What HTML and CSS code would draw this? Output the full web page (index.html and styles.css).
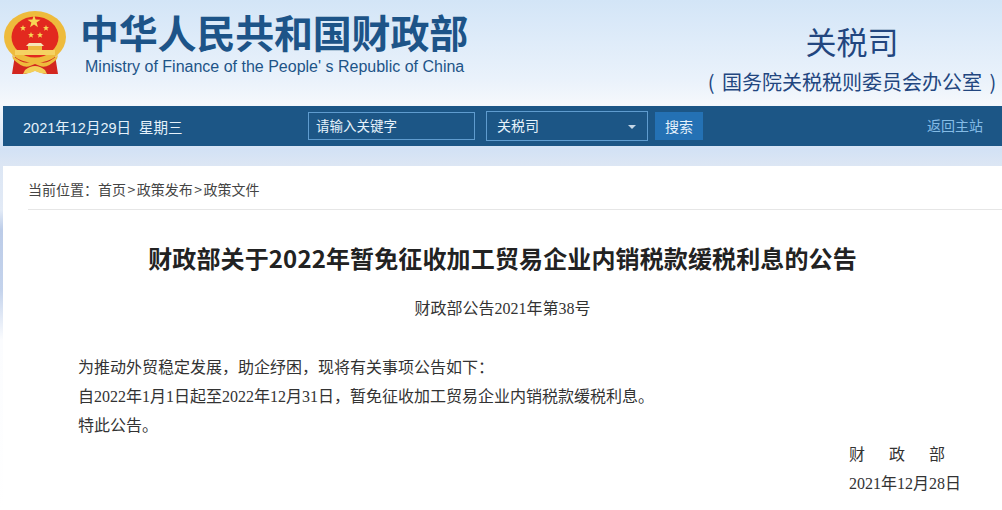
FILE: index.html
```html
<!DOCTYPE html>
<html lang="zh-CN">
<head>
    <meta charset="UTF-8">
    <title>财政部关于2022年暂免征收加工贸易企业内销税款缓税利息的公告</title>
    <link rel="stylesheet" href="styles.css">
</head>
<body>
    <div class="header">
        <div class="logo">
            <svg class="emblem" width="66" height="70" viewBox="0 0 66 70">
                <!-- ribbon -->
                <path d="M12 46 L9 65 L22 65 L31 62 L33 62 L42 65 L55 65 L52 46 Z" fill="#d3261f"/>
                <!-- ring -->
                <ellipse cx="32" cy="28" rx="31" ry="26" fill="#eebb3c"/>
                <ellipse cx="32" cy="28" rx="23.5" ry="20.5" fill="#e2291f"/>
                <!-- stars -->
                <polygon points="31,6 32.6,10.6 37.5,10.7 33.6,13.6 35,18.3 31,15.5 27,18.3 28.4,13.6 24.5,10.7 29.4,10.6" fill="#f7d654"/>
                <polygon points="20,16 20.8,18.1 23,18.2 21.3,19.5 21.9,21.7 20,20.5 18.1,21.7 18.7,19.5 17,18.2 19.2,18.1" fill="#f7d654"/>
                <polygon points="43,16 43.8,18.1 46,18.2 44.3,19.5 44.9,21.7 43,20.5 41.1,21.7 41.7,19.5 40,18.2 42.2,18.1" fill="#f7d654"/>
                <polygon points="28,23 28.8,25.1 31,25.2 29.3,26.5 29.9,28.7 28,27.5 26.1,28.7 26.7,26.5 25,25.2 27.2,25.1" fill="#f7d654"/>
                <polygon points="37,23 37.8,25.1 40,25.2 38.3,26.5 38.9,28.7 37,27.5 35.1,28.7 35.7,26.5 34,25.2 36.2,25.1" fill="#f7d654"/>
                <!-- gate -->
                <path d="M26 34 L38 34 L41 37 L23 37 Z" fill="#f6e6b8"/>
                <rect x="25" y="37" width="14" height="4" fill="#edb93f"/>
                <rect x="12" y="41" width="40" height="5" fill="#f5d262"/>
                <!-- wheat and knot -->
                <path d="M9 46 Q20 56 27 53 Q32 48 37 53 Q44 56 55 46 L54 50 Q44 60 37 57 L32 55 L27 57 Q20 60 10 50 Z" fill="#eebb3c"/>
                <path d="M22 61 Q32 53 42 61 L44 65 L37 64 L32 62 L27 64 L20 65 Z" fill="#f3cf58"/>
            </svg>
            <div class="logo-text">
                <div class="logo-cn">中华人民共和国财政部</div>
                <div class="logo-en">Ministry of Finance of the People' s Republic of China</div>
            </div>
        </div>
        <div class="dept">
            <div class="dept-name">关税司</div>
            <div class="dept-sub">( 国务院关税税则委员会办公室 )</div>
        </div>
    </div>

    <div class="nav">
        <div class="nav-date">2021年12月29日<span class="nav-week">星期三</span></div>
        <div class="search">
            <div class="search-input">请输入关键字</div>
            <div class="search-select">关税司<span class="caret"></span></div>
            <div class="search-btn">搜索</div>
        </div>
        <a class="nav-home">返回主站</a>
    </div>

    <div class="main">
        <div class="crumb">当前位置<span class="colon">：</span>首页<span class="sep">&gt;</span>政策发布<span class="sep">&gt;</span>政策文件</div>
        <h1 class="title">财政部关于2022年暂免征收加工贸易企业内销税款缓税利息的公告</h1>
        <div class="doc-no">财政部公告2021年第38号</div>
        <div class="body-text">
            <p>为推动外贸稳定发展，助企纾困，现将有关事项公告如下：</p>
            <p>自2022年1月1日起至2022年12月31日，暂免征收加工贸易企业内销税款缓税利息。</p>
            <p>特此公告。</p>
        </div>
        <div class="sign">
            <p class="sign-name">财政部</p>
            <p>2021年12月28日</p>
        </div>
    </div>
</body>
</html>
```

FILE: styles.css
```css
* {
    box-sizing: border-box;
    margin: 0;
    padding: 0;
}

html,
body {
    height: 510px;
    overflow: hidden;
}

body {
    background: linear-gradient(180deg, #d3e5f7 0, #eaf2fb 80px, #f5f8fc 104px, #d3e2f5 150px, #dce6f4 165px, #e2eaf6 210px, #bccce8 230px, #c4d3ec 290px, #fbfcfe 340px, #fff 510px);
    font-family: "Liberation Sans", "Noto Sans CJK SC", sans-serif;
    color: #333;
}

.header {
    height: 106px;
    display: flex;
    justify-content: space-between;
}

.logo {
    display: flex;
    padding: 9px 0 0 3px;
}

.emblem {
    flex: none;
}

.logo-text {
    margin-left: 11px;
}

.logo-cn {
    font-size: 39px;
    line-height: 44px;
    font-weight: 700;
    color: #1d5488;
    letter-spacing: -0.2px;
    font-family: "Noto Sans CJK SC", sans-serif;
}

.logo-en {
    font-size: 16px;
    line-height: 18px;
    margin-top: 5px;
    margin-left: 5px;
    color: #1d5488;
    white-space: nowrap;
}

.dept {
    width: 300px;
    text-align: center;
    color: #22467f;
    font-family: "Noto Sans CJK SC", sans-serif;
}

.dept-name {
    font-size: 31px;
    line-height: 40px;
    margin-top: 21px;
}

.dept-sub {
    font-size: 20px;
    line-height: 28px;
    margin-top: 7px;
    white-space: nowrap;
    word-spacing: 3px;
}

.nav {
    height: 40px;
    margin-left: 3px;
    background: #1c5686;
    display: flex;
    align-items: center;
    color: #e6f2fb;
    font-size: 14.5px;
}

.nav-date {
    margin-left: 20px;
    width: 285px;
}

.nav-week {
    margin-left: 8px;
}

.search {
    display: flex;
    align-items: center;
    font-family: "Noto Sans CJK SC", sans-serif;
    font-size: 14px;
}

.search-input {
    width: 167px;
    height: 28px;
    line-height: 24px;
    padding-left: 7px;
    border: 1px solid #5f9ccf;
    font-size: 13.5px;
}

.search-select {
    width: 162px;
    height: 30px;
    line-height: 26px;
    margin-left: 11px;
    padding-left: 10px;
    border: 1px solid #5f9ccf;
    position: relative;
}

.caret {
    position: absolute;
    right: 11px;
    top: 13px;
    border: 4px solid transparent;
    border-top: 4px solid #c4d6e6;
    border-bottom: 0;
}

.search-btn {
    width: 48px;
    height: 28px;
    line-height: 28px;
    margin-left: 7px;
    background: #2471b4;
    text-align: center;
}

.nav-home {
    margin-left: auto;
    margin-right: 19px;
    color: #85bce6;
    font-size: 14px;
    line-height: 20px;
    margin-top: -2px;
    font-family: "Noto Sans CJK SC", sans-serif;
}

.main {
    margin: 20px 0 0 3px;
    height: 344px;
    background: #fff;
    font-family: "Liberation Serif", "Noto Sans CJK SC", serif;
    font-size: 16px;
}

.crumb {
    margin-left: 25px;
    height: 44px;
    line-height: 46px;
    font-size: 14px;
    color: #444;
    font-family: "Noto Sans CJK SC", sans-serif;
    border-bottom: 1px solid #e6e6e6;
}

.colon {
    font-family: "Noto Sans CJK TC", sans-serif;
}

.sep {
    margin: 0 1.5px;
}

.title {
    font-size: 24px;
    line-height: 34px;
    text-align: center;
    color: #222;
    margin-top: 31px;
    font-weight: 700;
    font-family: "Noto Sans CJK SC", sans-serif;
    letter-spacing: 0.13px;
}

.doc-no {
    text-align: center;
    line-height: 24px;
    margin-top: 22px;
}

.body-text {
    margin: 32px 0 0 75px;
    line-height: 29px;
}

.sign {
    position: absolute;
    left: 849px;
    top: 440px;
    line-height: 29px;
}

.sign-name {
    letter-spacing: 24px;
}
```
